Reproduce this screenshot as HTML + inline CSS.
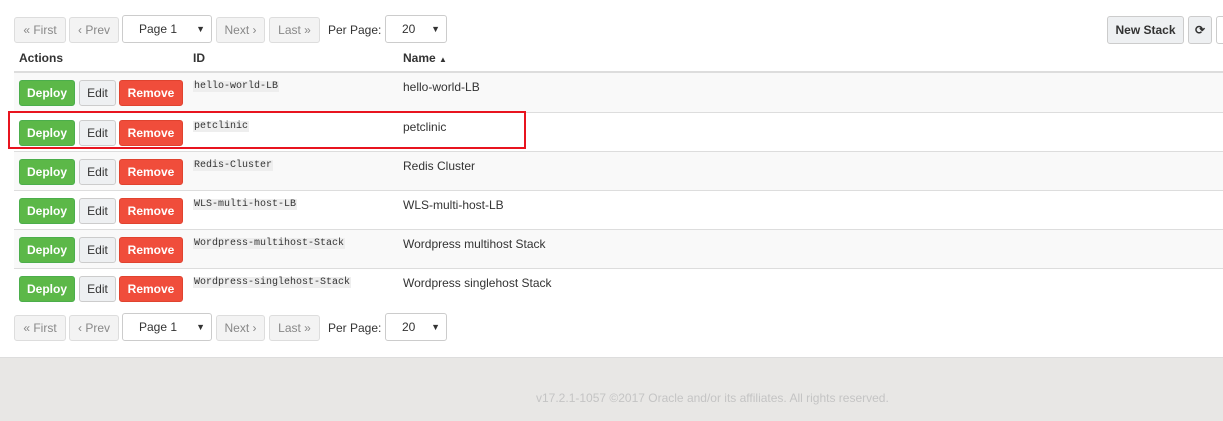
<!DOCTYPE html>
<html><head><style>
*{box-sizing:border-box;margin:0;padding:0}
body{width:1223px;height:421px;background:#fff;font-family:"Liberation Sans",sans-serif;font-size:12px;color:#333;position:relative;overflow:hidden}
.a{position:absolute}
.pb{position:absolute;height:26px;border:1px solid #ddd;border-radius:3px;background:#f3f3f3;color:#888;font-size:12px;line-height:24px;text-align:center}
.sel{position:absolute;height:28px;border:1px solid #ccc;border-radius:3px;background:#fff;color:#333;font-size:12px;line-height:26px;padding-left:16px}
.sel:after{content:"▼";position:absolute;right:6px;top:0;font-size:9px}
.row{position:absolute;left:14px;width:1209px;height:39px;border-top:1px solid #ddd}
.btn{position:absolute;top:7px;height:26px;border-radius:3px;font-weight:bold;font-size:12px;line-height:24px;text-align:center;color:#fff}
.d{left:5px;width:56px;background:#5cb848;border:1px solid #4cae4c}
.e{left:65px;width:37px;background:#eef0f2;border:1px solid #ccc;color:#333;font-weight:normal}
.r{left:105px;width:64px;background:#f04d3b;border:1px solid #e0432f}
.id{position:absolute;left:179px;top:8px;font-family:"Liberation Mono",monospace;font-size:10px;background:#eee;padding:0 1px;color:#333}
.nm{position:absolute;left:389px;top:7px;font-size:12px}
.hd{font-weight:bold;font-size:12px;top:51px}
</style></head><body>
<div class="pb" style="left:14px;top:17px;width:52px">« First</div>
<div class="pb" style="left:69px;top:17px;width:50px">‹ Prev</div>
<div class="sel" style="left:122px;top:15px;width:90px">Page 1</div>
<div class="pb" style="left:216px;top:17px;width:49px">Next ›</div>
<div class="pb" style="left:269px;top:17px;width:51px">Last »</div>
<div class="a" style="left:328px;top:23px">Per Page:</div>
<div class="sel" style="left:385px;top:15px;width:62px">20</div>
<div class="pb" style="left:1107px;top:16px;width:77px;height:28px;line-height:26px;color:#333;font-weight:bold;background:#eef0f2;border-color:#ccc">New Stack</div>
<div class="pb" style="left:1188px;top:16px;width:24px;height:28px;line-height:26px;color:#333;font-weight:bold;background:#eef0f2;border-color:#ccc">⟳</div>
<div class="pb" style="left:1216px;top:16px;width:20px;height:28px;background:#fff;border-color:#ccc"></div>
<div class="a hd" style="left:19px">Actions</div>
<div class="a hd" style="left:193px">ID</div>
<div class="a hd" style="left:403px">Name <span style="font-size:8px">▲</span></div>
<div class="a" style="left:14px;top:71px;width:1209px;height:2px;background:#ddd"></div>

<div class="row" style="top:73px;background:#f9f9f9;border-top:none"><div class="btn d">Deploy</div><div class="btn e">Edit</div><div class="btn r">Remove</div><div class="id">hello-world-LB</div><div class="nm">hello-world-LB</div></div>
<div class="row" style="top:112px"><div class="btn d">Deploy</div><div class="btn e">Edit</div><div class="btn r">Remove</div><div class="id">petclinic</div><div class="nm">petclinic</div></div>
<div class="row" style="top:151px;background:#f9f9f9"><div class="btn d">Deploy</div><div class="btn e">Edit</div><div class="btn r">Remove</div><div class="id">Redis-Cluster</div><div class="nm">Redis Cluster</div></div>
<div class="row" style="top:190px"><div class="btn d">Deploy</div><div class="btn e">Edit</div><div class="btn r">Remove</div><div class="id">WLS-multi-host-LB</div><div class="nm">WLS-multi-host-LB</div></div>
<div class="row" style="top:229px;background:#f9f9f9"><div class="btn d">Deploy</div><div class="btn e">Edit</div><div class="btn r">Remove</div><div class="id">Wordpress-multihost-Stack</div><div class="nm">Wordpress multihost Stack</div></div>
<div class="row" style="top:268px;height:40px"><div class="btn d">Deploy</div><div class="btn e">Edit</div><div class="btn r">Remove</div><div class="id">Wordpress-singlehost-Stack</div><div class="nm">Wordpress singlehost Stack</div></div>

<div class="a" style="left:8px;top:111px;width:518px;height:38px;border:2px solid #e8141f"></div>

<div class="pb" style="left:14px;top:315px;width:52px">« First</div>
<div class="pb" style="left:69px;top:315px;width:50px">‹ Prev</div>
<div class="sel" style="left:122px;top:313px;width:90px">Page 1</div>
<div class="pb" style="left:216px;top:315px;width:49px">Next ›</div>
<div class="pb" style="left:269px;top:315px;width:51px">Last »</div>
<div class="a" style="left:328px;top:321px">Per Page:</div>
<div class="sel" style="left:385px;top:313px;width:62px">20</div>

<div class="a" style="left:0;top:357px;width:1223px;height:64px;background:#e8e7e5;border-top:1px solid #ddd"></div>
<div class="a" style="left:536px;top:391px;color:#c4c4c4;font-size:12px">v17.2.1-1057 ©2017 Oracle and/or its affiliates. All rights reserved.</div>
</body></html>
